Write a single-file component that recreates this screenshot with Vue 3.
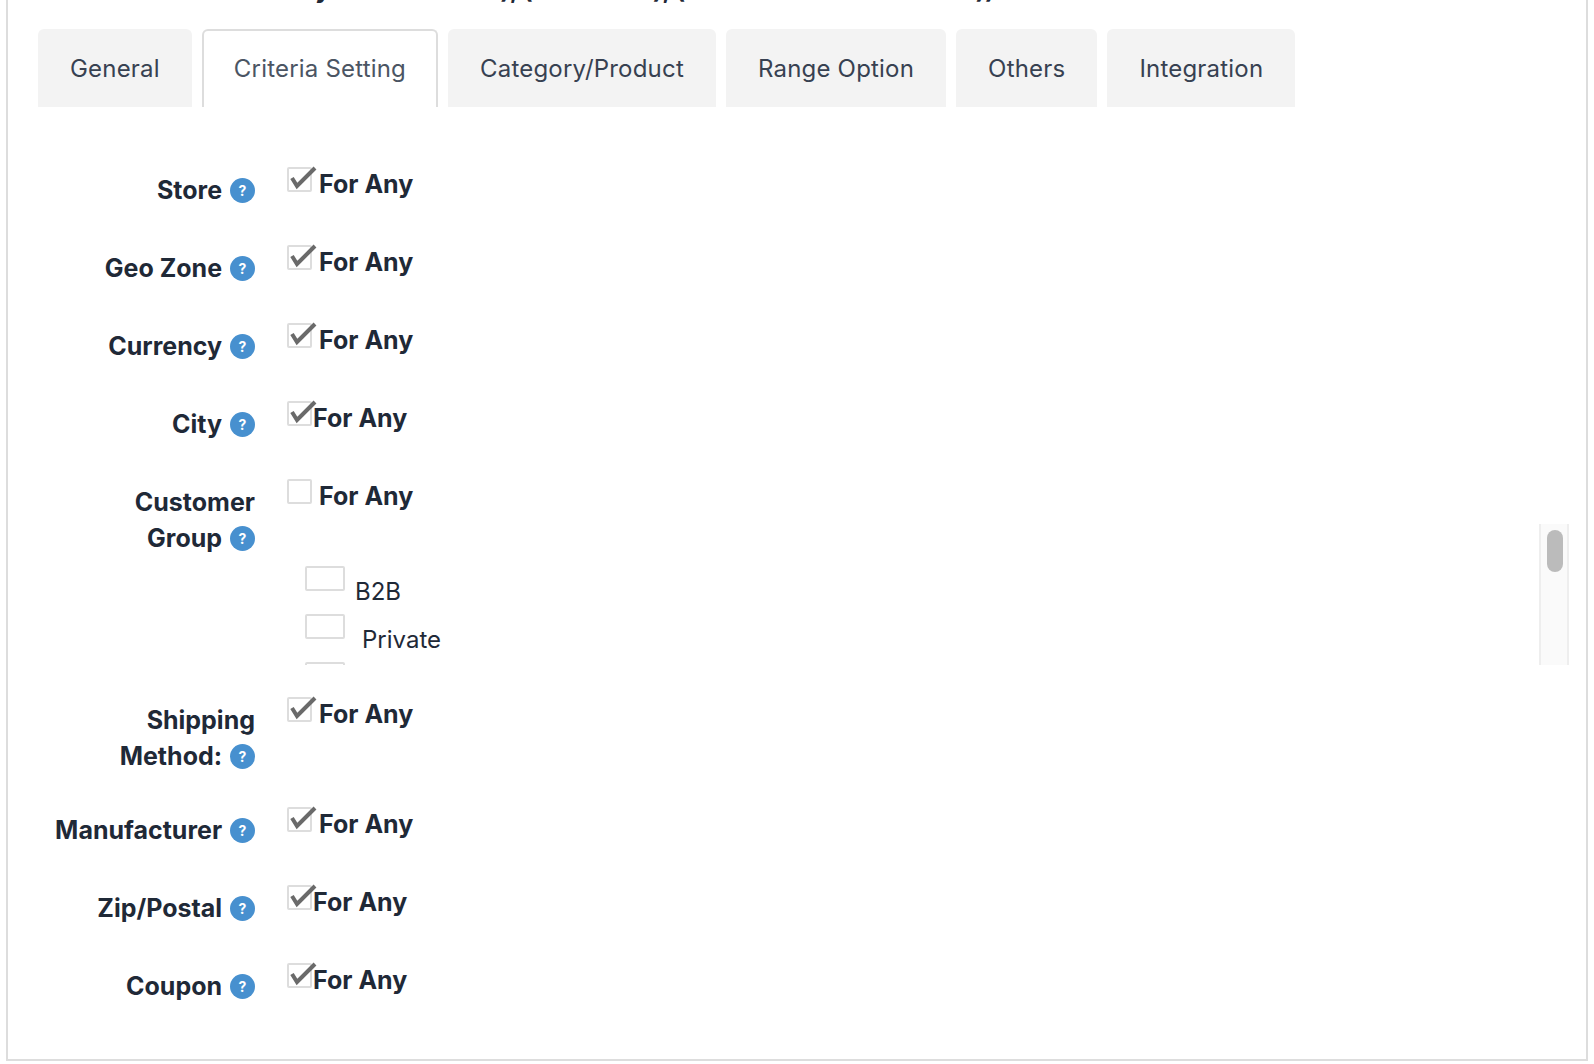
<script setup>
const tabs = ['General', 'Criteria Setting', 'Category/Product', 'Range Option', 'Others', 'Integration']
const before = [
  { first: 'Store', last: '', checked: true },
  { first: 'Geo', last: 'Zone', checked: true },
  { first: 'Currency', last: '', checked: true },
  { first: 'City', last: '', checked: true, tight: true }
]
const after = [
  { first: 'Shipping', last: 'Method:', checked: true },
  { first: 'Manufacturer', last: '', checked: true },
  { first: 'Zip/Postal', last: '', checked: true, tight: true },
  { first: 'Coupon', last: '', checked: true, tight: true }
]
</script>

<template>
  <div class="panel">
    <div class="heading">Total Sale by Stores (Order), (Customer), (Amount of Order Added))</div>
    <nav class="tabs">
      <div v-for="(t, i) in tabs" :key="t" class="tab" :class="{ active: i === 1 }">{{ t }}</div>
    </nav>
    <div class="form">
      <div v-for="r in before" :key="r.first" class="row">
        <div class="label">{{ r.first }} <span class="keep">{{ r.last }} <span class="help">?</span></span></div>
        <div class="field">
          <div class="any" :class="{ tight: r.tight }">
            <span class="box">
              <svg v-if="r.checked" class="tick" width="25" height="25" viewBox="0 0 25 25"><path d="M5 11 L10 19 L28 1" /></svg>
            </span>
            <span>For Any</span>
          </div>
        </div>
      </div>

      <div class="row has-list">
        <div class="label">Customer <span class="keep">Group <span class="help">?</span></span></div>
        <div class="field">
          <div class="any">
            <span class="box"></span>
            <span>For Any</span>
          </div>
          <div class="list">
            <div class="item"><span class="wide"></span><span class="name">B2B</span></div>
            <div class="item private"><span class="wide"></span><span class="name">Private</span></div>
            <div class="item"><span class="wide"></span></div>
            <div class="track"><div class="thumb"></div></div>
          </div>
        </div>
      </div>

      <div v-for="r in after" :key="r.first" class="row">
        <div class="label">{{ r.first }} <span class="keep">{{ r.last }} <span class="help">?</span></span></div>
        <div class="field">
          <div class="any" :class="{ tight: r.tight }">
            <span class="box">
              <svg v-if="r.checked" class="tick" width="25" height="25" viewBox="0 0 25 25"><path d="M5 11 L10 19 L28 1" /></svg>
            </span>
            <span>For Any</span>
          </div>
        </div>
      </div>
    </div>
  </div>
</template>

<style>
html, body { background: #fff; }
</style>

<style scoped>
.panel {
  box-sizing: border-box;
  width: 1582px;
  margin: -31px 0 0 6px;
  padding: 0 0 19px 30px;
  border: 2px solid #ddd;
  background: #fff;
  font-family: Inter, "Liberation Sans", sans-serif;
  color: #1f2937;
}
.heading {
  height: 36px;
  line-height: 36px;
  font-size: 25px;
  font-weight: 700;
  padding-left: 137px;
  white-space: nowrap;
}
.tabs {
  display: flex;
  gap: 10px;
  margin-top: 22px;
}
.tab {
  box-sizing: border-box;
  height: 78px;
  padding: 0 32px;
  line-height: 80px;
  font-size: 24px;
  letter-spacing: 0.2px;
  color: #374151;
  background: #f3f3f3;
  border-radius: 6px 6px 0 0;
}
.tab.active {
  padding: 0 30px;
  line-height: 76px;
  color: #4b5563;
  background: #fff;
  border: 2px solid #ddd;
  border-bottom: 0;
}
.form {
  padding-top: 59px;
}
.row {
  display: grid;
  grid-template-columns: 217px 1fr;
  column-gap: 32px;
  min-height: 78px;
  padding-bottom: 32px;
  box-sizing: border-box;
}
.row.has-list {
  padding-bottom: 31px;
}
.label {
  padding-top: 6px;
  line-height: 36px;
  font-size: 25px;
  font-weight: 700;
  text-align: right;
}
.keep {
  white-space: nowrap;
}
.help {
  display: inline-block;
  width: 25px;
  height: 25px;
  margin-left: 2px;
  border-radius: 50%;
  background: #4790cf;
  color: #fff;
  font-size: 14px;
  font-weight: 700;
  line-height: 25px;
  text-align: center;
  vertical-align: 3px;
}
.any {
  display: flex;
  gap: 7px;
  height: 36px;
  line-height: 37px;
  font-size: 25px;
  font-weight: 700;
}
.any.tight {
  gap: 1px;
}
.box {
  position: relative;
  box-sizing: border-box;
  flex: none;
  width: 25px;
  height: 25px;
  margin-top: 1px;
  border: 2px solid #ddd;
  border-radius: 2px;
  background: #fff;
}
.tick {
  position: absolute;
  left: -2px;
  top: -2px;
  overflow: visible;
  filter: blur(0.6px);
}
.tick path {
  fill: none;
  stroke: #6a6a6a;
  stroke-width: 4;
}
.list {
  position: relative;
  box-sizing: border-box;
  height: 141px;
  margin-top: 10px;
  width: 1282px;
  padding: 42px 0 0 18px;
  overflow: hidden;
}
.track {
  position: absolute;
  top: 0;
  right: 0;
  bottom: 0;
  box-sizing: border-box;
  width: 30px;
  background: #fafafa;
  border-left: 2px solid #eee;
  border-right: 2px solid #eee;
}
.thumb {
  width: 16px;
  height: 42px;
  margin: 6px 0 0 6px;
  border-radius: 8px;
  background: #bbb;
}
.item {
  display: flex;
  height: 48px;
  font-size: 24px;
  line-height: 36px;
}
.wide {
  box-sizing: border-box;
  flex: none;
  width: 40px;
  height: 25px;
  border: 2px solid #ddd;
  border-radius: 2px;
}
.name {
  margin-top: 8px;
  margin-left: 10px;
}
.private .name {
  margin-left: 17px;
}
</style>
